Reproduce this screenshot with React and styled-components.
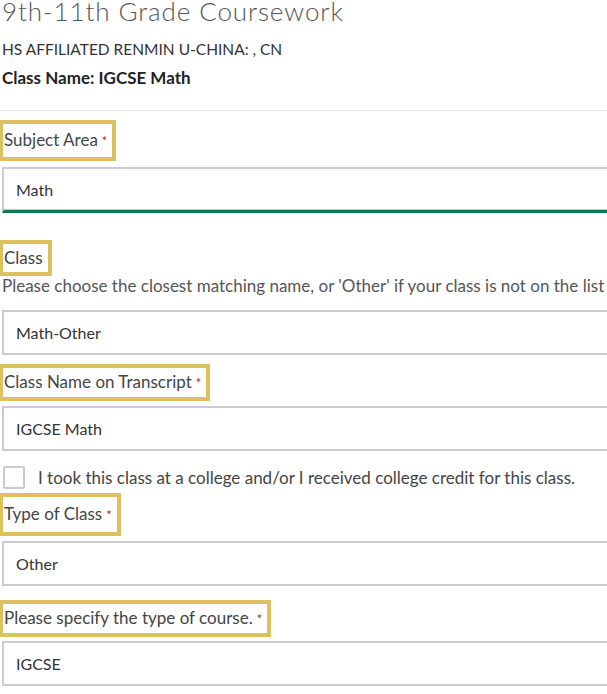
import React from "react";
import styled, { createGlobalStyle } from "styled-components";

const GlobalStyle = createGlobalStyle`
  html, body {
    margin: 0;
    padding: 0;
    background: #fff;
    overflow: hidden;
  }
  body {
    font-family: Lato, "Liberation Sans", sans-serif;
    color: #333;
  }
`;

const Page = styled.div`
  width: 640px;
  padding-left: 2px;
`;

const Title = styled.h1`
  margin: -5px 0 0;
  font-family: Lato, sans-serif;
  font-weight: 300;
  font-size: 26px;
  line-height: 32px;
  letter-spacing: 0.9px;
  color: #555;
`;

const School = styled.div`
  margin-top: 12px;
  font-size: 15.5px;
  line-height: 20px;
  color: #333;
`;

const ClassName = styled.div`
  margin-top: 9px;
  font-size: 17px;
  line-height: 20px;
  font-weight: 700;
  color: #222;
`;

const Divider = styled.hr`
  margin: 22px 0 9px -2px;
  border: none;
  border-top: 1px solid #e6e6e6;
`;

const Field = styled.div`
  display: flex;
  flex-direction: column;
  align-items: flex-start;
  margin-top: ${(p) => p.$top || 0}px;
`;

const Label = styled.label`
  display: inline-block;
  margin-left: -2px;
  padding: ${(p) => p.$pad || 3}px 5px ${(p) => p.$pad || 3}px 1px;
  border: 4px solid #dcc15e;
  border-left-width: 3px;
  font-size: 17px;
  line-height: 22px;
  color: #444;
`;

const Req = styled.span`
  color: #a9302a;
  font-size: 13px;
  margin-left: 4px;
`;

const Help = styled.div`
  font-size: 17px;
  line-height: 20px;
  color: #555;
  white-space: nowrap;
`;

const Input = styled.div`
  box-sizing: border-box;
  width: 100%;
  height: ${(p) => (p.$active ? 46 : 45)}px;
  margin-top: ${(p) => p.$gap || 5}px;
  padding: 0 12px;
  display: flex;
  align-items: center;
  border: 2px solid #cbcbcb;
  border-bottom: ${(p) => (p.$active ? "3px solid #0b7a50" : "2px solid #cbcbcb")};
  box-shadow: ${(p) => (p.$active ? "inset 0 -1px 0 #c4c4c4" : "none")};
  font-size: 16px;
  color: #333;
`;

const CheckRow = styled.label`
  display: flex;
  align-items: center;
  gap: 13px;
  margin-top: 15px;
  font-size: 17px;
  color: #444;
`;

const Box = styled.span`
  box-sizing: border-box;
  flex: none;
  width: 22px;
  height: 23px;
  border: 2px solid #cbcbcb;
  border-radius: 2px;
  margin-left: 1px;
`;

export default function App() {
  return (
    <Page>
      <GlobalStyle />
      <Title>9th-11th Grade Coursework</Title>
      <School>HS AFFILIATED RENMIN U-CHINA: , CN</School>
      <ClassName>Class Name: IGCSE Math</ClassName>
      <Divider />

      <Field>
        <Label $pad={5}>
          Subject Area<Req>*</Req>
        </Label>
        <Input $active $gap={6}>Math</Input>
      </Field>

      <Field $top={27}>
        <Label>Class</Label>
        <Help>
          Please choose the closest matching name, or 'Other' if your class is not on the list
        </Help>
        <Input $gap={14}>Math-Other</Input>
      </Field>

      <Field $top={9}>
        <Label>
          Class Name on Transcript<Req>*</Req>
        </Label>
        <Input>IGCSE Math</Input>
      </Field>

      <CheckRow>
        <Box />
        I took this class at a college and/or I received college credit for this class.
      </CheckRow>

      <Field $top={4}>
        <Label $pad={6}>
          Type of Class<Req>*</Req>
        </Label>
        <Input $gap={5}>Other</Input>
      </Field>

      <Field $top={14}>
        <Label>
          Please specify the type of course.<Req>*</Req>
        </Label>
        <Input $gap={4}>IGCSE</Input>
      </Field>
    </Page>
  );
}
